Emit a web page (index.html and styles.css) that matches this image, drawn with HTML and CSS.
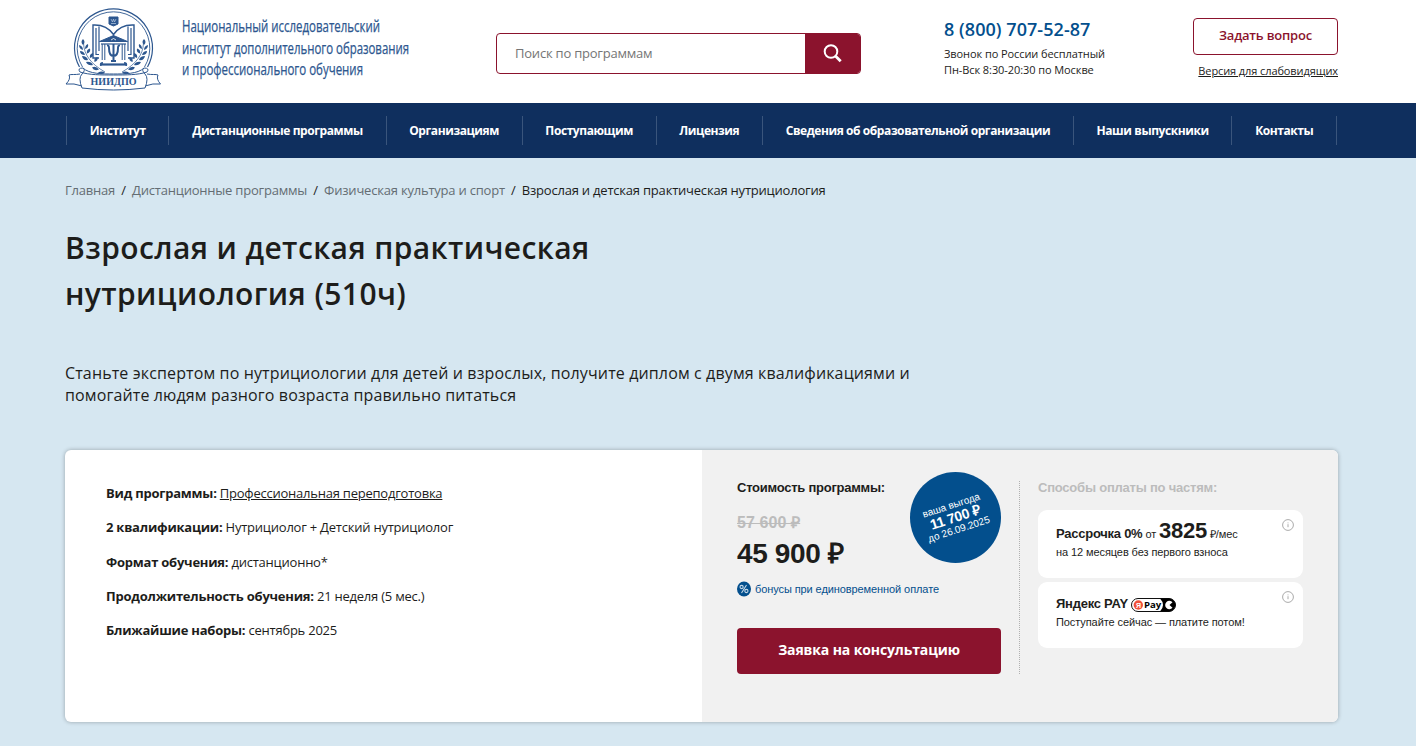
FILE: index.html
```html
<!DOCTYPE html>
<html lang="ru">
<head>
<meta charset="utf-8">
<title>Взрослая и детская практическая нутрициология</title>
<link rel="stylesheet" href="styles.css">
</head>
<body>
<header class="header container">
  <a class="logo">
    <svg class="logo-emblem" width="96" height="84" viewBox="0 0 96 84" fill="none" stroke="#2d578f">
      <path d="M14.500 60A39 39 0 1 1 82.500 60" stroke-width="1.200"/>
      <path d="M17.500 60A36.300 36.300 0 1 1 79.500 60" stroke-width=".9"/>
      <path d="M44 10h9v7l-4.500 2-4.500-2z" fill="#2d578f"/>
      <path d="M46 12l1.500 3 1-3 1 3 1.500-3M46 16.500h5" stroke="#b9cbe2" stroke-width=".7"/>
      <path d="M34 51H28V18C37 17.500 44 21 48.500 27.500C53 21 60 17.500 69 18V51H63" stroke-width="1.400"/>
      <path d="M34 47.500H31V21M63 47.500H66V21M34 44V19.500M63 44V19.500" stroke-width="1.200"/>
      <path d="M48.500 27.500V31" stroke-width="1"/>
      <path d="M48.500 28.500L34.500 34.500H62.500Z" fill="#2d578f"/>
      <path d="M46 33l2.500-1.500L51 33" stroke="#fff" stroke-width=".8"/>
      <path d="M36 37H61" stroke-width="1.200"/>
      <path d="M37.200 37V53M39.800 37V53M57.200 37V53M59.800 37V53" stroke-width="1"/>
      <path d="M42 38.500Q44 38 44 41C44 46 45.500 49 48.500 49S53 46 53 41Q53 38 55 38.500M48.500 37V53.500M46 54H51" stroke-width="2"/>
      <path d="M35 57.500H62" stroke-width="2.200"/>
      <path d="M18.500 36C19 48 26 57 40 65M78.500 36C78 48 71 57 57 65" stroke-width=".7"/>
      <g fill="#2d578f" stroke="none">
        <path id="laurel" d="M18 38q-3-3 0-6q3 3 0 6zM18 43q-4-1-4-5q4 1 4 5zM20 42q0-4 3-5q1 4-3 5zM20 48q-5 0-5-4q4 0 5 4zM22 46.500q-1-4 3-5q1 4-3 5zM23 53q-5 1-6-4q5 0 6 4zM25 51q-1-4 3-5q1 4-3 5zM28 58q-5 1-7-3q5-1 7 3zM29.500 55q-1-4 3-5q1 4-3 5zM34 62.500q-5 2-7-2q4-2 7 2zM35 59q-1-4 3-4q0 4-3 4zM40 65.500q-4 3-7 0q4-2 7 0z"/>
        <use href="#laurel" transform="translate(97 0) scale(-1 1)"/>
      </g>
      <path d="M15 67C10 68 6 67 4 68Q6 72 1 77Q9 76 17 79M82 67C87 68 91 67 93 68Q91 72 95.500 77Q88 76 80 79" fill="#fff"/>
      <path d="M18 61Q12 61 15 65C24 68 36 68 48.500 68C61 68 73 68 82 65Q85 61 79 61Q76 63 80 67Q84 71 80 81Q64 83 48.500 83T17 81Q13 71 17 67Q21 63 18 61Z" fill="#fff"/>
      <path d="M18 61C24 67 38 67 48.500 67S73 67 79 61" stroke-width="1"/>
      <text class="logo-abbr" x="25.500" y="78" textLength="46">НИИДПО</text>
    </svg>
    <svg class="logo-name" width="240" height="72" viewBox="0 0 240 72">
      <text x="1" y="18.500" textLength="198" lengthAdjust="spacingAndGlyphs">Национальный исследовательский</text>
      <text x="1" y="40.500" textLength="227" lengthAdjust="spacingAndGlyphs">институт дополнительного образования</text>
      <text x="1" y="62" textLength="181" lengthAdjust="spacingAndGlyphs">и профессионального обучения</text>
    </svg>
  </a>
  <div class="search">
    <span class="search-field">Поиск по программам</span>
    <span class="search-button"><svg width="20" height="20" viewBox="0 0 20 20" fill="none" stroke="#fff" stroke-width="2"><circle cx="8" cy="7.500" r="6.300"/><path d="M12.700 12.200l5 5" stroke-width="2.800"/></svg></span>
  </div>
  <div class="phone">
    <div class="phone-number">8 (800) 707-52-87</div>
    <div>Звонок по России бесплатный</div>
    <div>Пн-Вск 8:30-20:30 по Москве</div>
  </div>
  <div class="actions">
    <a class="ask">Задать вопрос</a>
    <a class="vision">Версия для слабовидящих</a>
  </div>
</header>
<nav class="nav">
  <div class="nav-list">
    <a class="nav-item">Институт</a>
    <a class="nav-item">Дистанционные программы</a>
    <a class="nav-item">Организациям</a>
    <a class="nav-item">Поступающим</a>
    <a class="nav-item">Лицензия</a>
    <a class="nav-item">Сведения об образовательной организации</a>
    <a class="nav-item">Наши выпускники</a>
    <a class="nav-item">Контакты</a>
  </div>
</nav>
<main class="container">
  <div class="crumbs"><a>Главная</a><i>/</i><a>Дистанционные программы</a><i>/</i><a>Физическая культура и спорт</a><i>/</i><span>Взрослая и детская практическая нутрициология</span></div>
  <h1 class="title">Взрослая и детская практическая<br>нутрициология (510ч)</h1>
  <p class="lead">Станьте экспертом по нутрициологии для детей и взрослых, получите диплом с двумя квалификациями и<br>помогайте людям разного возраста правильно питаться</p>
  <section class="card">
    <div class="facts">
      <div><b>Вид программы:</b> <u>Профессиональная переподготовка</u></div>
      <div><b>2 квалификации:</b> Нутрициолог + Детский нутрициолог</div>
      <div><b>Формат обучения:</b> дистанционно*</div>
      <div><b>Продолжительность обучения:</b> 21 неделя (5 мес.)</div>
      <div><b>Ближайшие наборы:</b> сентябрь 2025</div>
    </div>
    <div class="offer">
      <div class="price">
        <div class="price-label">Стоимость программы:</div>
        <div class="price-old">57 600 ₽</div>
        <div class="price-new">45 900 ₽</div>
        <div class="bonus">
          <svg width="14" height="16" viewBox="0 0 14 16"><ellipse cx="7" cy="8" rx="7" ry="7.500" fill="#034f8d"/><g fill="none" stroke="#c5d8e8" stroke-width="1.100"><circle cx="4.600" cy="6" r="1.600"/><circle cx="9.400" cy="10" r="1.600"/><path d="M9.500 4l-5 8"/></g></svg>
          <span>бонусы при единовременной оплате</span>
        </div>
        <a class="cta">Заявка на консультацию</a>
        <div class="benefit"><div class="benefit-text"><div>ваша выгода</div><b>11 700 ₽</b><div>до 26.09.2025</div></div></div>
      </div>
      <div class="payments">
        <div class="payments-label">Способы оплаты по частям:</div>
        <div class="plan plan-first">
          <div class="plan-main"><b>Рассрочка 0%</b> <span>от</span> <strong>3825</strong> <span>₽/мес</span></div>
          <div class="plan-note">на 12 месяцев без первого взноса</div>
          <svg class="info" width="12" height="12" viewBox="0 0 12 12" fill="none" stroke="#aaa"><circle cx="6" cy="6" r="5.400"/><path d="M6 5.200v3M6 3.500v.8"/></svg>
        </div>
        <div class="plan plan-second">
          <div class="plan-main"><b>Яндекс PAY</b>
            <svg class="yapay" width="45" height="14" viewBox="0 0 45 14"><rect x=".5" y=".5" width="44" height="13" rx="6.500" fill="#fff" stroke="#111"/><path d="M29 .5h9a6.500 6.500 0 0 1 0 13h-9q3-3 3-6.500t-3-6.500z" fill="#000"/><circle cx="7.300" cy="7" r="4.700" fill="#f0503a"/><text x="5.100" y="9.700" class="ya-letter">Я</text><text x="13" y="10" class="ya-word" textLength="17" lengthAdjust="spacingAndGlyphs">Pay</text><path d="M41.500 4.200A4.200 4.200 0 1 0 41.500 9.800L38.500 7Z" fill="#fff"/></svg>
          </div>
          <div class="plan-note">Поступайте сейчас — платите потом!</div>
          <svg class="info" width="12" height="12" viewBox="0 0 12 12" fill="none" stroke="#aaa"><circle cx="6" cy="6" r="5.400"/><path d="M6 5.200v3M6 3.500v.8"/></svg>
        </div>
      </div>
    </div>
  </section>
</main>
</body>
</html>
```
FILE: styles.css
```css
* { box-sizing: border-box; }
body { margin: 0; height: 746px; overflow: hidden; background: #d6e7f1; color: #1d1d1b; font-family: "Open Sans", sans-serif; font-size: 13px; }
.container { padding: 0 78px 0 65px; }
.header { display: flex; height: 103px; background: #fff; }
.logo { display: flex; width: 431px; padding-top: 7px; }
.logo-emblem { margin-right: 20px; }
.logo-abbr { font: bold 10px "Liberation Serif", serif; fill: #2d578f; stroke: none; }
.logo-name { margin-top: 6px; overflow: visible; font: 15.500px "Open Sans", sans-serif; fill: #2d578f; stroke: #2d578f; stroke-width: .25px; }
.search { display: flex; width: 365px; height: 41px; margin-top: 33px; border: 1px solid #8b132d; border-radius: 4px; overflow: hidden; }
.search-field { flex: 1; padding-left: 18px; line-height: 39px; color: #757575; letter-spacing: -.22px; }
.search-button { display: flex; align-items: center; justify-content: center; width: 55px; background: #8b132d; }
.phone { width: 249px; margin-left: 83px; padding-top: 16px; font-size: 11px; line-height: 16px; letter-spacing: -.08px; }
.phone-number { height: 30px; font-size: 18px; line-height: 26px; font-weight: 600; letter-spacing: .05px; color: #034f8d; white-space: nowrap; }
.actions { width: 145px; padding-top: 18px; text-align: right; }
.ask { display: block; height: 37px; border: 1px solid #8b132d; border-radius: 4px; line-height: 33px; text-align: center; font-weight: 600; letter-spacing: -.2px; color: #8b132d; }
.vision { display: block; margin-top: 8px; font-size: 11px; line-height: 16px; letter-spacing: -.1px; text-decoration: underline; white-space: nowrap; }
.nav { height: 55px; padding: 13px 79px 0 66px; background: #0f2f5e; }
.nav-list { display: flex; height: 29px; border-left: 1px solid #3a557c; }
.nav-item { flex: 1 0 auto; border-right: 1px solid #3a557c; text-align: center; line-height: 29px; font-size: 12px; font-weight: 700; letter-spacing: -.42px; color: #fff; white-space: nowrap; }
.crumbs { height: 66px; padding-top: 23px; line-height: 18px; letter-spacing: -.21px; white-space: nowrap; }
.crumbs a { color: #646d73; }
.crumbs i { margin: 0 6.200px; font-style: normal; }
.title { margin: 0; font-size: 30px; line-height: 46px; font-weight: 600; letter-spacing: .4px; position: relative; top: 1px; }
.lead { margin: 46px 0 44px; font-size: 16px; line-height: 22px; letter-spacing: .128px; white-space: nowrap; }
.card { display: flex; height: 272px; border-radius: 6px; overflow: hidden; background: #fff; box-shadow: 0 0 4px rgba(0,0,0,.3); }
.facts { width: 637px; padding: 26px 41px; line-height: 34.250px; letter-spacing: -.23px; }
.offer { display: flex; flex: 1; padding: 31px 35px; background: #f1f1f1; font-family: "Liberation Sans", sans-serif; }
.price { position: relative; width: 283px; height: 193px; border-right: 1px dotted #b0b0b0; }
.price-label { font-size: 13px; line-height: 14px; font-weight: 700; letter-spacing: -.25px; }
.price-old { margin-top: 18px; font-size: 16px; line-height: 20px; font-weight: 700; letter-spacing: .1px; color: #bcbcbc; text-decoration: line-through; }
.price-new { margin-top: 4px; font-size: 28px; line-height: 34px; font-weight: 700; letter-spacing: -.35px; }
.bonus { display: flex; align-items: center; gap: 4px; height: 16px; margin-top: 10px; font-size: 11px; letter-spacing: -.09px; color: #034f8d; }
.cta { display: block; width: 264px; height: 46px; margin-top: 31px; border-radius: 4px; background: #8b132d; color: #fff; text-align: center; font: 700 14px/44px "Open Sans", sans-serif; letter-spacing: -.12px; }
.benefit { position: absolute; left: 173px; top: -9px; display: flex; align-items: center; justify-content: center; width: 91px; height: 91px; border-radius: 50%; background: #034f8d; color: #fff; }
.benefit-text { transform: rotate(-18deg); text-align: center; font-size: 10px; line-height: 12px; white-space: nowrap; }
.benefit-text b { display: block; font-size: 14px; line-height: 13px; letter-spacing: -.3px; }
.payments { width: 265px; margin-left: 18px; flex: none; }
.payments-label { height: 29px; line-height: 14px; font-size: 13px; font-weight: 700; letter-spacing: -.22px; color: #bcbcbc; }
.plan { position: relative; padding-left: 18px; border-radius: 9px; background: #fff; font-size: 11px; letter-spacing: -.09px; white-space: nowrap; }
.plan-first { height: 68px; padding-top: 8px; }
.plan-second { height: 66px; margin-top: 4px; padding-top: 12px; }
.plan-main { height: 26px; line-height: 26px; }
.plan-second .plan-main { height: 20px; line-height: 20px; }
.plan-main b { font-size: 13px; letter-spacing: -.25px; }
.plan-main strong { font-size: 22px; letter-spacing: -.3px; }
.plan-note { line-height: 16px; }
.info { position: absolute; right: 9px; top: 9px; }
.yapay { vertical-align: -4px; }
.ya-letter { font: bold 7px "Liberation Sans", sans-serif; fill: #fff; }
.ya-word { font: bold 9px "Open Sans", sans-serif; }
```
